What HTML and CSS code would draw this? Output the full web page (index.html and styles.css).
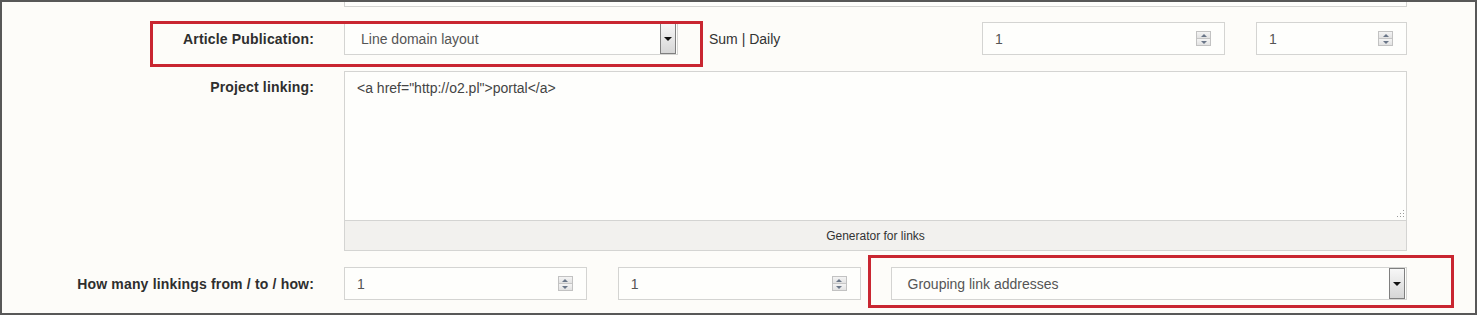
FILE: index.html
```html
<!DOCTYPE html>
<html lang="en">
<head>
  <meta charset="UTF-8" />
  <title>Project settings</title>
  <link rel="stylesheet" href="styles.css">
</head>
<body>
  <div class="panel">
    <div class="prev-field"></div>

    <div class="form">
      <div class="row">
        <label class="label">Article Publication:</label>
        <div class="fields">
          <div class="select select-short">
            <span>Line domain layout</span>
            <span class="drop"><i></i></span>
          </div>
          <span class="note">Sum | Daily</span>
          <div class="num num-wide push">
            <span>1</span>
            <span class="spin"><b class="up"></b><b class="down"></b></span>
          </div>
          <div class="num num-small">
            <span>1</span>
            <span class="spin"><b class="up"></b><b class="down"></b></span>
          </div>
        </div>
      </div>

      <div class="row row-top">
        <label class="label label-top">Project linking:</label>
        <div class="linking">
          <textarea class="code">&lt;a href="http://o2.pl"&gt;portal&lt;/a&gt;</textarea>
          <svg class="grip" width="7" height="7" viewBox="0 0 7 7">
            <rect x="6" y="0" width="1" height="1" fill="#9a9a9a"/>
            <rect x="3" y="3" width="1" height="1" fill="#9a9a9a"/>
            <rect x="6" y="3" width="1" height="1" fill="#9a9a9a"/>
            <rect x="0" y="6" width="1" height="1" fill="#9a9a9a"/>
            <rect x="3" y="6" width="1" height="1" fill="#9a9a9a"/>
            <rect x="6" y="6" width="1" height="1" fill="#9a9a9a"/>
          </svg>
          <div class="generator">Generator for links</div>
        </div>
      </div>

      <div class="row">
        <label class="label">How many linkings from / to / how:</label>
        <div class="fields">
          <div class="num num-wide">
            <span>1</span>
            <span class="spin"><b class="up"></b><b class="down"></b></span>
          </div>
          <div class="num num-wide">
            <span>1</span>
            <span class="spin"><b class="up"></b><b class="down"></b></span>
          </div>
          <div class="select select-long">
            <span>Grouping link addresses</span>
            <span class="drop"><i></i></span>
          </div>
        </div>
      </div>
    </div>

    <!-- annotation frames -->
    <div class="mark mark-one"></div>
    <div class="mark mark-two"></div>
  </div>
</body>
</html>
```

FILE: styles.css
```css
body {
  margin: 0;
  background: #ffffff;
  font-family: "Liberation Sans", Arial, sans-serif;
  color: #333;
}

.panel {
  position: relative;
  width: 1477px;
  height: 315px;
  box-sizing: border-box;
  border: 2px solid #585858;
  background: #fdfcf9;
  overflow: hidden;
}

.prev-field {
  margin-left: 342px;
  width: 1061px;
  height: 4px;
  border: 1px solid #d4d4d2;
  border-top: none;
  background: #fefefc;
}

.form {
  display: flex;
  flex-direction: column;
  gap: 16px;
  padding-top: 15px;
}

.row {
  display: grid;
  grid-template-columns: 312px 1063px;
  column-gap: 30px;
  align-items: center;
}

.row-top {
  align-items: start;
}

.label {
  text-align: right;
  font-size: 14px;
  font-weight: bold;
  letter-spacing: 0.17px;
  color: #2e2e2e;
}

.label-top {
  padding-top: 8px;
}

.fields {
  display: flex;
  align-items: center;
  gap: 31px;
}

.push {
  margin-left: auto;
}

.note {
  font-size: 14px;
  color: #333;
}

/* select boxes */
.select {
  height: 33px;
  box-sizing: border-box;
  border: 1px solid #d4d4d2;
  background: #fefefc;
  display: flex;
  align-items: center;
  justify-content: space-between;
  padding: 0 1px 0 16px;
  font-size: 14px;
  color: #555;
}

.select-short {
  width: 334px;
}

.select-long {
  width: 517px;
  margin-left: -1px;
}

.drop {
  width: 16px;
  height: 31px;
  box-sizing: border-box;
  border: 1px solid #7f7f7f;
  background: linear-gradient(#f7f7f7, #d6d6d6);
  display: flex;
  align-items: center;
  justify-content: center;
}

.drop i {
  width: 0;
  height: 0;
  border-left: 4px solid transparent;
  border-right: 4px solid transparent;
  border-top: 4px solid #111;
}

/* number fields */
.num {
  height: 33px;
  box-sizing: border-box;
  border: 1px solid #d4d4d2;
  background: #fefefc;
  display: flex;
  align-items: center;
  justify-content: space-between;
  padding: 0 13px 0 12px;
  font-size: 14px;
  color: #555;
}

.num-wide {
  width: 243px;
}

.num-small {
  width: 151px;
}

.spin {
  width: 15px;
  height: 15px;
  box-sizing: border-box;
  border: 1px solid #c2c2c2;
  display: flex;
  flex-direction: column;
}

.spin b {
  flex: 1;
  display: flex;
  align-items: center;
  justify-content: center;
  background: linear-gradient(#f4f4f4, #e2e2e2);
}

.spin b.up {
  border-bottom: 1px solid #c6c6c6;
}

.spin b::after {
  content: "";
  width: 0;
  height: 0;
  border-left: 3px solid transparent;
  border-right: 3px solid transparent;
}

.spin b.up::after {
  border-bottom: 3px solid #6a7688;
}

.spin b.down::after {
  border-top: 3px solid #6a7688;
}

/* linking textarea */
.linking {
  position: relative;
  width: 1063px;
}

.code {
  display: block;
  width: 100%;
  height: 150px;
  box-sizing: border-box;
  margin: 0;
  border: 1px solid #d4d4d2;
  background: #fefefc;
  padding: 8px 12px;
  font-family: "Liberation Sans", Arial, sans-serif;
  font-size: 14px;
  color: #444;
  outline: none;
  resize: none;
}

.grip {
  position: absolute;
  right: 3px;
  top: 139px;
}

.generator {
  height: 30px;
  box-sizing: border-box;
  border: 1px solid #d4d4d2;
  border-top: none;
  background: #f2f1ee;
  display: flex;
  align-items: center;
  justify-content: center;
  font-size: 12px;
  color: #333;
}

/* red annotation frames */
.mark {
  position: absolute;
  box-sizing: border-box;
  border: 3px solid #c92631;
}

.mark-one {
  left: 148px;
  top: 19px;
  width: 553px;
  height: 46px;
}

.mark-two {
  left: 866px;
  top: 253px;
  width: 586px;
  height: 53px;
}
```
